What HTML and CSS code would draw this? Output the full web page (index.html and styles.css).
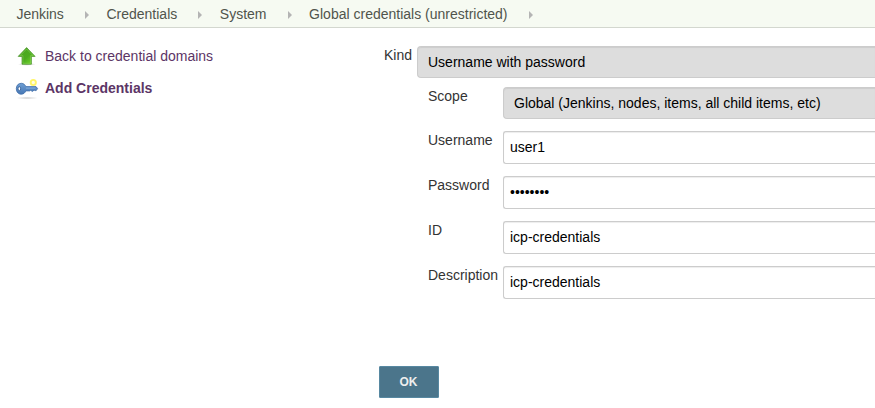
FILE: index.html
```html
<!DOCTYPE html>
<html lang="en">
<head>
<meta charset="utf-8">
<title>Add Credentials [Jenkins]</title>
<link rel="stylesheet" href="styles.css">
</head>
<body>
<nav class="breadcrumbs">
  <a>Jenkins</a><i class="arrow"></i>
  <a>Credentials</a><i class="arrow"></i>
  <a>System</a><i class="arrow"></i>
  <a>Global credentials (unrestricted)</a><i class="arrow"></i>
</nav>
<div class="page">
  <aside class="tasks">
    <a class="task">
      <svg class="icon" width="24" height="24" viewBox="0 0 24 24">
        <defs>
          <linearGradient id="green" x1="0" y1="0" x2="1" y2="1"><stop offset="0" stop-color="#4aa522"/><stop offset=".55" stop-color="#4cab20"/><stop offset="1" stop-color="#7ce22d"/></linearGradient>
          <radialGradient id="shade"><stop offset="0" stop-color="#888" stop-opacity=".6"/><stop offset="1" stop-color="#999" stop-opacity="0"/></radialGradient>
        </defs>
        <ellipse cx="11.8" cy="20.3" rx="9" ry="1.5" fill="url(#shade)"/>
        <path d="M11.6 3.600 20.100 12.400H16.400V20.200H7V12.400H3.200Z" fill="url(#green)" stroke="#48912a" stroke-width=".7" stroke-linejoin="round"/>
        <path d="M11.600 5 18.100 11.600H15.600V19.300H7.900V11.600H5.200Z" fill="none" stroke="#9bdc6c" stroke-opacity=".6" stroke-width=".7"/>
      </svg>
      <span>Back to credential domains</span>
    </a>
    <a class="task current">
      <svg class="icon" width="24" height="24" viewBox="0 0 24 24">
        <defs>
          <linearGradient id="blue" x1="0" y1="0" x2="0" y2="1"><stop offset="0" stop-color="#6f9fd3"/><stop offset="1" stop-color="#4677b5"/></linearGradient>
        </defs>
        <ellipse cx="12" cy="22" rx="11" ry="1.600" fill="url(#shade)" opacity=".7"/>
        <path d="M6.300 7.300C8.500 7.300 10.200 8.700 10.800 10.600H21L22.600 12.600 21.200 14.600H20L19 13.900 18 15.200H16.700L15.800 14.100 14.800 14.900H10.800C10 16.900 8.400 18.200 6.300 18.200 3.300 18.200 1.300 15.900 1.300 12.700S3.300 7.300 6.300 7.300Z" fill="url(#blue)" stroke="#416fa9" stroke-width=".8" stroke-linejoin="round"/>
        <path d="M11 12.100H20.500" stroke="#8fb5df" stroke-width=".8"/>
        <ellipse cx="4.300" cy="12.700" rx="1.300" ry="2" fill="#fff" stroke="#365f96" stroke-width=".9"/>
        <circle cx="18.300" cy="6.500" r="2.600" fill="#fffde0" stroke="#fff568" stroke-width="1.900"/>
      </svg>
      <span>Add Credentials</span>
    </a>
  </aside>
  <main class="form">
    <div class="kind">
      <label>Kind</label>
      <div class="select">Username with password</div>
    </div>
    <div class="fields">
      <label>Scope</label><div class="select">Global (Jenkins, nodes, items, all child items, etc)</div>
      <label>Username</label><input type="text" value="user1">
      <label>Password</label><input type="password" value="password">
      <label>ID</label><input type="text" value="icp-credentials">
      <label>Description</label><input type="text" value="icp-credentials">
    </div>
    <button class="ok">OK</button>
  </main>
</div>
</body>
</html>
```
FILE: styles.css
```css
* { box-sizing: border-box; }
body {
  margin: 0;
  background: #fff;
  color: #333;
  font: 14px/16px "Liberation Sans", Arial, sans-serif;
}
.breadcrumbs {
  display: flex;
  align-items: center;
  height: 28px;
  padding-left: 16.4px;
  background: #f6faf2;
  border-bottom: 1px solid #d3d7cf;
  color: #50544c;
  white-space: nowrap;
}
.arrow {
  width: 0;
  height: 0;
  margin: 2px 17.4px 0 21.2px;
  border: solid transparent;
  border-width: 4px 0 4px 4px;
  border-left-color: #b4b4b4;
}
.page { display: flex; }
.tasks {
  flex: 0 0 379px;
  padding: 16px 0 0 15px;
}
.task {
  display: flex;
  align-items: center;
  gap: 6px;
  height: 24px;
  margin-bottom: 8px;
  color: #5c3566;
}
.current { font-weight: bold; }
.icon { flex: none; }
.form {
  flex: 1;
  min-width: 0;
  padding-top: 18px;
}
.kind {
  display: grid;
  grid-template-columns: 33px 1fr;
  padding-left: 5px;
}
.kind label { padding-top: 1px; }
.select,
.fields input {
  border: 1px solid #ccc;
  border-right: 0;
  box-shadow: inset 0 1px 1px rgba(0, 0, 0, .075);
  color: #000;
}
.select {
  height: 32px;
  padding: 7px 10px;
  background: #ddd;
  border-radius: 4px 0 0 4px;
  white-space: nowrap;
}
.fields {
  display: grid;
  grid-template-columns: 75px 1fr;
  row-gap: 12px;
  margin: 9px 0 0 49px;
}
.fields label { padding-top: 1px; }
.fields input {
  width: 100%;
  height: 33px;
  margin: 0;
  padding: 5px 6px 7px;
  background: #fff;
  border-radius: 3px 0 0 3px;
  font: inherit;
}
.ok {
  display: block;
  width: 60px;
  height: 32px;
  margin-top: 67px;
  padding: 0 1px 0 0;
  background: #4b758b;
  border: 1px solid #5788a1;
  border-radius: 1px;
  color: #eee;
  font: bold 12px/30px "Liberation Sans", Arial, sans-serif;
}
```
